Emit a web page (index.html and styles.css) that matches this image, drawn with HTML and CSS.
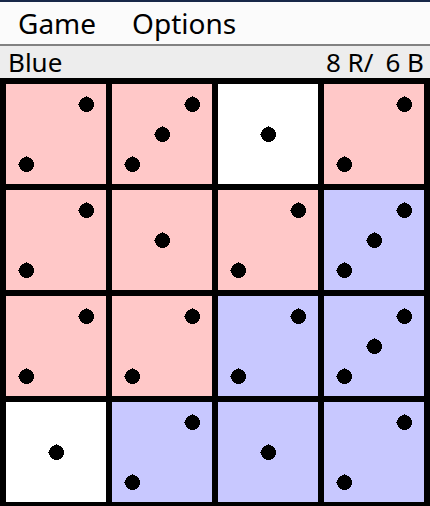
FILE: index.html
```html
<!DOCTYPE html>
<html lang="en">
<head>
<meta charset="utf-8">
<title>Game</title>
<link rel="stylesheet" href="styles.css">
</head>
<body>
<svg class="sprites" aria-hidden="true">
  <symbol id="pip" viewBox="0 0 16 16"><circle cx="8.5" cy="8.5" r="7.5"/><path d="M0 8h1v1H0zM8 0h1v1H8z"/></symbol>
  <symbol id="one" viewBox="0 0 100 100"><use href="#pip" x="42" y="42" width="16" height="16"/></symbol>
  <symbol id="two" viewBox="0 0 100 100"><use href="#pip" x="72" y="12" width="16" height="16"/><use href="#pip" x="12" y="72" width="16" height="16"/></symbol>
  <symbol id="three" viewBox="0 0 100 100"><use href="#pip" x="72" y="12" width="16" height="16"/><use href="#pip" x="42" y="42" width="16" height="16"/><use href="#pip" x="12" y="72" width="16" height="16"/></symbol>
</svg>
<nav class="menu">
  <button class="menu-item" type="button">Game</button>
  <button class="menu-item" type="button">Options</button>
</nav>
<header class="status">
  <span>Blue</span>
  <span class="score"><span>8 R/</span> <span>6 B</span></span>
</header>
<main class="board">
  <button class="cell red" type="button" aria-label="Red 2"><svg class="pips"><use href="#two"/></svg></button>
  <button class="cell red" type="button" aria-label="Red 3"><svg class="pips"><use href="#three"/></svg></button>
  <button class="cell" type="button" aria-label="White 1"><svg class="pips"><use href="#one"/></svg></button>
  <button class="cell red" type="button" aria-label="Red 2"><svg class="pips"><use href="#two"/></svg></button>
  <button class="cell red" type="button" aria-label="Red 2"><svg class="pips"><use href="#two"/></svg></button>
  <button class="cell red" type="button" aria-label="Red 1"><svg class="pips"><use href="#one"/></svg></button>
  <button class="cell red" type="button" aria-label="Red 2"><svg class="pips"><use href="#two"/></svg></button>
  <button class="cell blue" type="button" aria-label="Blue 3"><svg class="pips"><use href="#three"/></svg></button>
  <button class="cell red" type="button" aria-label="Red 2"><svg class="pips"><use href="#two"/></svg></button>
  <button class="cell red" type="button" aria-label="Red 2"><svg class="pips"><use href="#two"/></svg></button>
  <button class="cell blue" type="button" aria-label="Blue 2"><svg class="pips"><use href="#two"/></svg></button>
  <button class="cell blue" type="button" aria-label="Blue 3"><svg class="pips"><use href="#three"/></svg></button>
  <button class="cell" type="button" aria-label="White 1"><svg class="pips"><use href="#one"/></svg></button>
  <button class="cell blue" type="button" aria-label="Blue 2"><svg class="pips"><use href="#two"/></svg></button>
  <button class="cell blue" type="button" aria-label="Blue 1"><svg class="pips"><use href="#one"/></svg></button>
  <button class="cell blue" type="button" aria-label="Blue 2"><svg class="pips"><use href="#two"/></svg></button>
</main>
</body>
</html>
```

FILE: styles.css
```css
* {
  box-sizing: border-box;
}

body {
  margin: 0;
  background: #000;
  color: #000;
  font-family: "Noto Sans", "Open Sans", sans-serif;
}

button {
  margin: 0;
  padding: 0;
  border: 0;
  background: none;
  color: inherit;
  font: inherit;
}

.sprites {
  display: none;
}

.menu {
  display: flex;
  gap: 36px;
  padding: 0 18px;
  border-top: 2px solid #182848;
  border-bottom: 2px solid #828282;
  background: #fbfbfb;
  font-size: 28px;
  line-height: 42px;
}

.status {
  display: flex;
  justify-content: space-between;
  padding: 0 6px 0 8px;
  background: #ededed;
  font-size: 26px;
  line-height: 32px;
}

.score {
  display: flex;
  gap: 12px;
}

.board {
  display: grid;
  grid-template-columns: repeat(4, 1fr);
  gap: 6px;
  padding: 6px 6px 4px;
  background: #000;
}

.cell {
  aspect-ratio: 1;
  background: #fff;
}

.red {
  background: #ffc8c8;
}

.blue {
  background: #c8c8ff;
}

.pips {
  display: block;
  width: 100%;
  height: 100%;
  shape-rendering: crispEdges;
}
```
